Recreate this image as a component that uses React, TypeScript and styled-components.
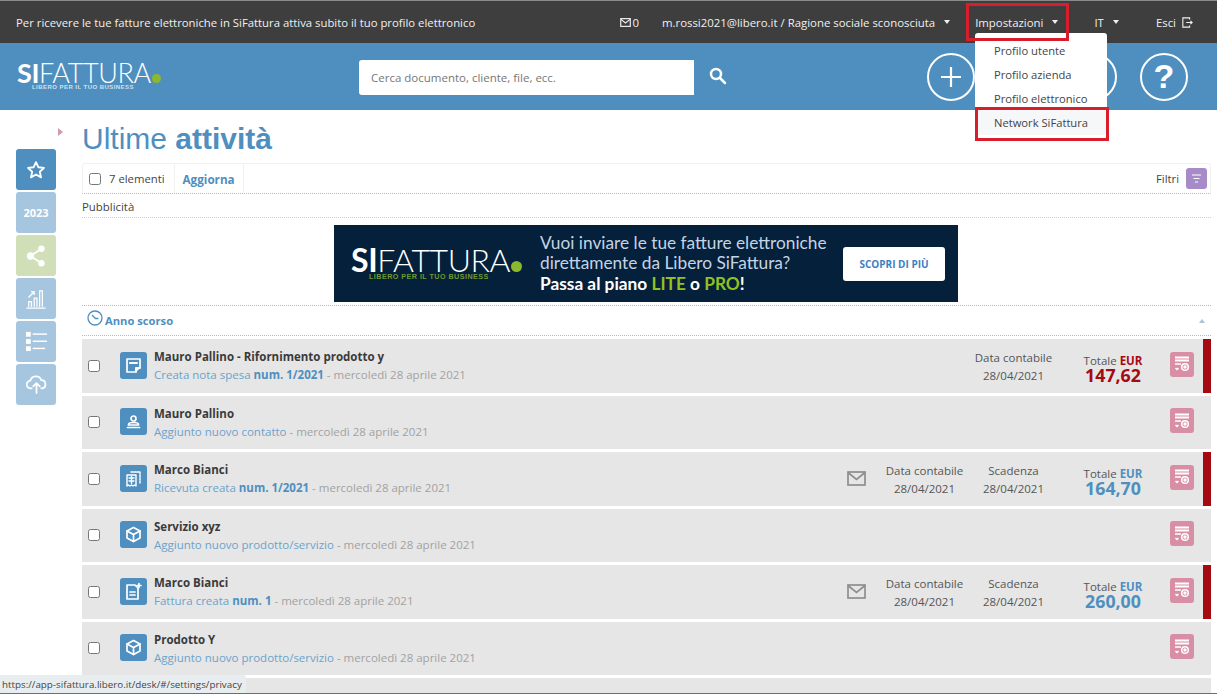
import React from "react";
import styled, { createGlobalStyle } from "styled-components";

const Global = createGlobalStyle`
  html, body { margin: 0; padding: 0; height: 694px; overflow: hidden; background: #fff; }
  body { font-family: "Open Sans", "Liberation Sans", sans-serif; color: #333; }
  * { box-sizing: border-box; }
`;

const Page = styled.div`
  position: relative;
  width: 1217px;
  height: 694px;
  overflow: hidden;
`;

const TopBar = styled.div`
  height: 43px;
  background: #3e3e3e;
  border-top: 1px solid #8a8a8a;
  color: #f0f0f0;
  font-size: 11.4px;
  display: flex;
  align-items: center;
  padding: 0 24px 0 16px;
`;
const TopMessage = styled.div`
  flex: 1;
  font-size: 11.33px;
`;
const TopItem = styled.div<{ $ml: number; $gap?: number }>`
  margin-left: ${(p) => p.$ml}px;
  display: flex;
  align-items: center;
  gap: ${(p) => p.$gap ?? 3}px;
  white-space: nowrap;
`;
const Caret = styled.span`
  margin-left: 6px;
  width: 0;
  height: 0;
  border-left: 3.5px solid transparent;
  border-right: 3.5px solid transparent;
  border-top: 4px solid #f0f0f0;
`;

const Header = styled.header`
  height: 67px;
  background: #4f8fbf;
  display: flex;
  align-items: center;
  padding-left: 17px;
`;
const Logo = styled.div`
  width: 342px;
  color: #fff;
  padding-bottom: 1px;
`;
const LogoWord = styled.div<{ $size: number }>`
  font-family: "Lato", sans-serif;
  font-size: ${(p) => p.$size}px;
  line-height: ${(p) => p.$size * 0.86}px;
  font-weight: 300;
  letter-spacing: -0.4px;
  display: flex;
  align-items: baseline;
  b { font-weight: 700; }
`;
const LogoDot = styled.span<{ $size: number }>`
  width: ${(p) => p.$size}px;
  height: ${(p) => p.$size}px;
  border-radius: 50%;
  background: #8cb82b;
  margin-left: 1px;
`;
const LogoTag = styled.div<{ $color: string; $ml: number; $size: number }>`
  font-family: "Liberation Sans", sans-serif;
  font-size: ${(p) => p.$size}px;
  line-height: ${(p) => p.$size + 1}px;
  font-weight: 700;
  letter-spacing: 0.45px;
  color: ${(p) => p.$color};
  margin-left: ${(p) => p.$ml}px;
  white-space: nowrap;
`;
const Search = styled.div`
  width: 335px;
  height: 35px;
  background: #fff;
  border-radius: 3px 0 0 3px;
  color: #777;
  font-size: 11.5px;
  display: flex;
  align-items: center;
  padding-left: 12px;
  margin-top: 1px;
`;
const SearchIcon = styled.svg`
  margin-left: 15px;
  margin-top: -1px;
`;
const RoundGroup = styled.div`
  margin-left: auto;
  margin-right: 29px;
  display: flex;
  gap: 23px;
`;
const RoundButton = styled.div`
  width: 48px;
  height: 48px;
  border: 2.5px solid #fff;
  border-radius: 50%;
  display: flex;
  align-items: center;
  justify-content: center;
  color: #fff;
  font-family: "Liberation Sans", sans-serif;
  font-weight: 700;
  font-size: 34px;
`;

const Body = styled.div`
  display: flex;
  padding-right: 6px;
`;
const Side = styled.aside`
  width: 82px;
  padding: 39px 0 0 16px;
  display: flex;
  flex-direction: column;
  gap: 2px;
`;
const SideButton = styled.div<{ $bg: string }>`
  width: 40px;
  height: 41px;
  border-radius: 3px;
  background: ${(p) => p.$bg};
  color: #fff;
  display: flex;
  align-items: center;
  justify-content: center;
  font-size: 11px;
  font-weight: 700;
`;
const SideArrow = styled.span`
  position: absolute;
  left: 58px;
  top: 128px;
  width: 0;
  height: 0;
  border-top: 4.5px solid transparent;
  border-bottom: 4.5px solid transparent;
  border-left: 5px solid #cf9aaa;
`;

const Main = styled.main`
  flex: 1;
  min-width: 0;
`;
const Title = styled.h1`
  margin: 0;
  height: 53px;
  padding-top: 12px;
  font-family: "Liberation Sans", sans-serif;
  font-size: 30px;
  line-height: 34px;
  font-weight: 400;
  color: #4f8fbf;
  b { font-weight: 700; }
`;
const Toolbar = styled.div`
  height: 31px;
  border: 1px solid #f1f1f1;
  border-radius: 3px 3px 0 0;
  border-bottom: 1px dotted #9dc0d8;
  display: flex;
  align-items: center;
  font-size: 11.3px;
`;
const ToolCount = styled.div`
  display: flex;
  align-items: center;
  height: 100%;
  padding: 0 9px 0 6px;
  border-right: 1px solid #f1f1f1;
  color: #444;
  gap: 8px;
`;
const ToolRefresh = styled.div`
  height: 100%;
  display: flex;
  align-items: center;
  padding: 0 8px;
  border-right: 1px solid #f1f1f1;
  font-size: 11.7px;
  font-weight: 700;
  color: #4f8fbf;
`;
const ToolFilter = styled.div`
  margin-left: auto;
  display: flex;
  align-items: center;
  gap: 7px;
  padding-right: 3px;
  color: #444;
`;
const FilterBtn = styled.div`
  width: 21px;
  height: 21px;
  border-radius: 3px;
  background: #a78bc9;
  display: flex;
  align-items: center;
  justify-content: center;
`;
const Check = styled.span`
  flex: none;
  width: 12px;
  height: 12px;
  background: #fff;
  border: 1px solid #767676;
  border-radius: 2.5px;
`;
const AdLabel = styled.div`
  height: 24px;
  font-size: 11.4px;
  line-height: 26px;
  color: #444;
  border-bottom: 1px dotted #c4d3de;
`;
const AdWrap = styled.div`
  height: 88px;
  padding: 7px 1px 0 0;
  display: flex;
  justify-content: center;
  border-bottom: 1px dotted #9dc0d8;
`;
const Banner = styled.div`
  width: 624px;
  height: 77px;
  background: #04203a;
  color: #fff;
  display: flex;
  align-items: center;
  padding-left: 17px;
`;
const BannerLogo = styled.div`
  width: 189px;
`;
const BannerText = styled.div`
  width: 303px;
  font-size: 17.3px;
  line-height: 20.500px;
  color: #c4d4e4;
  font-family: "Lato", sans-serif;
  white-space: nowrap;
  strong { color: #fff; font-weight: 700; }
  em { color: #93c01f; font-style: normal; font-weight: 700; }
`;
const BannerCta = styled.div`
  width: 102px;
  height: 34px;
  margin-top: 1px;
  background: #fff;
  border-radius: 3px;
  color: #3d7fc0;
  font-size: 10px;
  font-weight: 700;
  display: flex;
  align-items: center;
  justify-content: center;
`;
const GroupHead = styled.div`
  height: 30px;
  border-bottom: 1px dotted #9dc0d8;
  display: flex;
  align-items: center;
  padding-left: 5px;
  color: #4f8fbf;
  font-size: 11.2px;
  font-weight: 700;
  gap: 2px;
`;
const HeadCaret = styled.span`
  margin-left: auto;
  margin-right: 6px;
  width: 0;
  height: 0;
  border-left: 3.5px solid transparent;
  border-right: 3.5px solid transparent;
  border-bottom: 4px solid #a9c3d8;
`;
const List = styled.div`
  padding-top: 3px;
  display: flex;
  flex-direction: column;
  gap: 3px;
`;
const Row = styled.div`
  position: relative;
  height: 53.5px;
  flex: none;
  background: #e6e6e6;
  display: flex;
  align-items: center;
  padding-left: 6px;
  padding-right: 17px;
`;
const RowIcon = styled.div`
  width: 27px;
  height: 27px;
  margin-left: 20px;
  border-radius: 3px;
  background: #4f8fbf;
  display: flex;
  align-items: center;
  justify-content: center;
  flex: none;
  margin-top: -1px;
`;
const RowText = styled.div`
  flex: 1;
  margin-left: 7px;
  min-width: 0;
  padding-top: 2px;
`;
const RowTitle = styled.div`
  font-size: 11.5px;
  line-height: 16px;
  font-weight: 700;
  color: #3a3a3a;
`;
const RowSub = styled.div`
  font-size: 11.5px;
  line-height: 19px;
  color: #a2a2a2;
  span { color: #6ba3cc; }
  b { color: #4f8fbf; font-weight: 700; }
`;
const MailIcon = styled.svg`
  flex: none;
  margin-right: 14px;
`;
const Cell = styled.div`
  width: 89px;
  margin-top: 2px;
  text-align: center;
  font-size: 11.5px;
  line-height: 18px;
  color: #555;
`;
const Total = styled.div<{ $color: string }>`
  width: 110px;
  margin-top: 6px;
  text-align: center;
  font-size: 11.5px;
  color: #555;
  line-height: 13px;
  b { color: ${(p) => p.$color}; font-weight: 700; }
  strong {
    display: block;
    color: ${(p) => p.$color};
    font-size: 17.8px;
    line-height: 16px;
    font-weight: 700;
  }
`;
const ActionBtn = styled.div`
  width: 24px;
  height: 25px;
  margin-left: 2px;
  border-radius: 3px;
  background: #d88fa6;
  display: flex;
  align-items: center;
  justify-content: center;
  margin-top: -3px;
`;
const Flag = styled.span`
  position: absolute;
  right: 0;
  top: 0;
  bottom: 0;
  width: 8px;
  background: #a50a12;
`;

const Menu = styled.div`
  position: absolute;
  left: 975px;
  top: 33px;
  width: 132px;
  height: 107px;
  background: #fff;
  border-radius: 3px;
  padding-top: 6px;
  font-size: 11.2px;
  color: #444;
`;
const MenuItem = styled.div<{ $active?: boolean }>`
  height: 24px;
  line-height: 24px;
  padding-left: 19px;
  background: ${(p) => (p.$active ? "#f6f7f9" : "transparent")};
`;
const RedBox = styled.div<{ $l: number; $t: number; $w: number; $h: number }>`
  position: absolute;
  left: ${(p) => p.$l}px;
  top: ${(p) => p.$t}px;
  width: ${(p) => p.$w}px;
  height: ${(p) => p.$h}px;
  border: 3px solid #d81e2c;
`;
const StatusBar = styled.div`
  position: absolute;
  left: 0;
  bottom: 1px;
  width: 246px;
  height: 18px;
  background: #e8edf0;
  border-top-right-radius: 3px;
  font-size: 9.8px;
  line-height: 19px;
  padding-left: 2px;
  color: #444;
  white-space: nowrap;
`;
const BottomEdge = styled.div`
  position: absolute;
  left: 0;
  right: 0;
  bottom: 0;
  height: 1px;
  background: #6e6e6e;
`;

const DocIcon = ({ kind }: { kind: string }) => {
  const p = { fill: "none", stroke: "#fff", strokeWidth: 1.7, strokeLinejoin: "round" as const, strokeLinecap: "round" as const };
  return (
    <svg width="19" height="19" viewBox="0 0 19 19">
      {kind === "note" && (
        <g {...p}>
          <path d="M3 3h13v8l-5 5H3z" />
          <path d="M12 16v-4h4M6 7h7" strokeWidth={2} />
        </g>
      )}
      {kind === "user" && (
        <g {...p}>
          <circle cx="9.5" cy="6.500" r="2.500" />
          <path d="M4.500 12.500c0-1 2-2 5-2s5 1 5 2v.5h-10z" />
          <path d="M3.500 15.500h12" />
        </g>
      )}
      {kind === "receipt" && (
        <g {...p} strokeWidth={1.4}>
          <path d="M7 3h9v11" strokeDasharray="2 1" />
          <path d="M3 6h9v11l-1.500-1-1.500 1-1.500-1-1.500 1-1.500-1L3 17z" />
          <path d="M5 9h5M5 12h5M7.500 7.500v7" />
        </g>
      )}
      {kind === "box" && (
        <g {...p}>
          <path d="M9.500 2.500l6.500 3.500v7l-6.500 3.500L3 13V6z" />
          <path d="M3 6l6.500 3.500L16 6M9.500 9.500v7" />
        </g>
      )}
      {kind === "invoice" && (
        <g {...p}>
          <path d="M3 3h8l3 3v11H3z" />
          <path d="M6 10h5M6 13h5" />
          <path d="M15 1.500v4M13 3.500h4" />
        </g>
      )}
    </svg>
  );
};

const ActionIcon = () => (
  <svg width="18" height="18" viewBox="0 0 18 18" fill="none" stroke="#fff" strokeWidth="1.500">
    <path d="M2 2.500h14M2 5.500h14" strokeWidth="2" />
    <path d="M2 9h6M2.500 13l1.500 1.500L5.500 13" />
    <circle cx="12" cy="12" r="3.300" />
    <circle cx="12" cy="12" r="1" fill="#fff" />
  </svg>
);

const Envelope = () => (
  <MailIcon width="19" height="15" viewBox="0 0 19 15" fill="none" stroke="#8e8e8e" strokeWidth="1.700">
    <rect x="1" y="1" width="17" height="13" />
    <path d="M1 1.500l8.500 7 8.500-7" />
  </MailIcon>
);

const Logotype = ({ banner }: { banner?: boolean }) => (
  <>
    <LogoWord $size={banner ? 32 : 27}>
      <b>SI</b>FATTURA
      <LogoDot $size={banner ? 11 : 9} />
    </LogoWord>
    <LogoTag $color={banner ? "#6d9a2e" : "#cfe0ee"} $ml={banner ? 18 : 15} $size={banner ? 7.2 : 6}>
      LIBERO PER IL TUO BUSINESS
    </LogoTag>
  </>
);

type Item = {
  icon: string;
  title: string;
  lead: string;
  num?: string;
  mail?: boolean;
  cells?: [string, string][];
  total?: [string, string];
  flag?: boolean;
};

const items: Item[] = [
  { icon: "note", title: "Mauro Pallino - Rifornimento prodotto y", lead: "Creata nota spesa", num: "num. 1/2021", cells: [["Data contabile", "28/04/2021"]], total: ["147,62", "#a50a12"], flag: true },
  { icon: "user", title: "Mauro Pallino", lead: "Aggiunto nuovo contatto" },
  { icon: "receipt", title: "Marco Bianci", lead: "Ricevuta creata", num: "num. 1/2021", mail: true, cells: [["Data contabile", "28/04/2021"], ["Scadenza", "28/04/2021"]], total: ["164,70", "#4f8fbf"], flag: true },
  { icon: "box", title: "Servizio xyz", lead: "Aggiunto nuovo prodotto/servizio" },
  { icon: "invoice", title: "Marco Bianci", lead: "Fattura creata", num: "num. 1", mail: true, cells: [["Data contabile", "28/04/2021"], ["Scadenza", "28/04/2021"]], total: ["260,00", "#4f8fbf"], flag: true },
  { icon: "box", title: "Prodotto Y", lead: "Aggiunto nuovo prodotto/servizio" },
  { icon: "box", title: "", lead: "" },
];

const side = { strokeWidth: 1.8, stroke: "#fff", fill: "none", strokeLinecap: "round" as const, strokeLinejoin: "round" as const };

export default function App() {
  return (
    <Page>
      <Global />
      <TopBar>
        <TopMessage>Per ricevere le tue fatture elettroniche in SiFattura attiva subito il tuo profilo elettronico</TopMessage>
        <TopItem $ml={0} $gap={1}>
          <svg width="11" height="9" viewBox="0 0 12 10" fill="none" stroke="#f0f0f0" strokeWidth="1.300">
            <rect x="0.700" y="0.700" width="10.600" height="8.600" />
            <path d="M1 1.500l5 4 5-4" />
          </svg>
          0
        </TopItem>
        <TopItem $ml={23}>m.rossi2021@libero.it / Ragione sociale sconosciuta<Caret /></TopItem>
        <TopItem $ml={25}>Impostazioni<Caret /></TopItem>
        <TopItem $ml={36}>IT<Caret /></TopItem>
        <TopItem $ml={37}>
          Esci
          <svg width="11" height="11" viewBox="0 0 13 13" fill="none" stroke="#f0f0f0" strokeWidth="1.300" style={{ marginLeft: 3 }}>
            <path d="M9 3V1H1v11h8v-2M5 6.500h7M10 4.500l2 2-2 2" />
          </svg>
        </TopItem>
      </TopBar>

      <Header>
        <Logo><Logotype /></Logo>
        <Search>Cerca documento, cliente, file, ecc.</Search>
        <SearchIcon width="18" height="18" viewBox="0 0 18 18" fill="none" stroke="#fff" strokeWidth="2.500" strokeLinecap="round">
          <circle cx="7" cy="7" r="5" />
          <path d="M11 11l5 5" />
        </SearchIcon>
        <RoundGroup>
          <RoundButton>
            <svg width="22" height="22" viewBox="0 0 22 22" stroke="#fff" strokeWidth="2.200"><path d="M11 1v20M1 11h20" /></svg>
          </RoundButton>
          <RoundButton />
          <RoundButton>
            <svg width="30" height="30" viewBox="0 0 30 30" fill="none" stroke="#fff" strokeWidth="2">
              <path d="M15 5c-7 0-12 4-12 11v7h24v-7c0-7-5-11-12-11z" />
            </svg>
          </RoundButton>
          <RoundButton>?</RoundButton>
        </RoundGroup>
      </Header>

      <Body>
        <SideArrow />
        <Side>
          <SideButton $bg="#4f8fbf">
            <svg width="20" height="20" viewBox="0 0 24 24" {...side} strokeWidth={2.200}>
              <path d="M12 2.500l2.900 6.200 6.700.8-5 4.600 1.400 6.700-6-3.400-6 3.400 1.400-6.700-5-4.600 6.700-.8z" />
            </svg>
          </SideButton>
          <SideButton $bg="#a6c6e0">2023</SideButton>
          <SideButton $bg="#d0dfb8">
            <svg width="20" height="22" viewBox="0 0 22 24" fill="#fff" stroke="#fff" strokeWidth="2">
              <path d="M17 4L5 12l12 8" fill="none" />
              <circle cx="17" cy="4" r="2.500" />
              <circle cx="5" cy="12" r="3" />
              <circle cx="17" cy="20" r="2.500" />
            </svg>
          </SideButton>
          <SideButton $bg="#a6c6e0">
            <svg width="20" height="24" viewBox="0 0 22 24" {...side} strokeWidth={1.400}>
              <path d="M1 22h20M3 20v-5h3v5M9 20v-9h3v9M15 20V3h3v17M3 10l6-6M6 4h3v3" />
            </svg>
          </SideButton>
          <SideButton $bg="#a6c6e0">
            <svg width="21" height="21" viewBox="0 0 22 22" fill="#fff">
              <rect x="0" y="1" width="5" height="5" />
              <rect x="0" y="8.500" width="5" height="5" />
              <rect x="0" y="16" width="5" height="5" />
              <rect x="7" y="2.500" width="15" height="1.500" />
              <rect x="7" y="10" width="15" height="1.500" />
              <rect x="7" y="17.500" width="13" height="1.500" />
            </svg>
          </SideButton>
          <SideButton $bg="#a6c6e0">
            <svg width="21" height="21" viewBox="0 0 22 22" {...side}>
              <path d="M6 15H5a4 4 0 0 1-.5-8A6 6 0 0 1 16 6.500 4.300 4.300 0 0 1 17 15h-1" />
              <path d="M11 20v-10M7.500 13L11 9.500l3.500 3.500" />
            </svg>
          </SideButton>
        </Side>

        <Main>
          <Title>Ultime <b>attività</b></Title>
          <Toolbar>
            <ToolCount><Check />7 elementi</ToolCount>
            <ToolRefresh>Aggiorna</ToolRefresh>
            <ToolFilter>
              Filtri
              <FilterBtn>
                <svg width="11" height="9" viewBox="0 0 11 9" stroke="#fff" strokeWidth="1.200"><path d="M1 1h9M2.500 4.500h6M4 8h3" /></svg>
              </FilterBtn>
            </ToolFilter>
          </Toolbar>
          <AdLabel>Pubblicità</AdLabel>
          <AdWrap>
            <Banner>
              <BannerLogo><Logotype banner /></BannerLogo>
              <BannerText>
                Vuoi inviare le tue fatture elettroniche<br />
                direttamente da Libero SiFattura?<br />
                <strong>Passa al piano <em>LITE</em> o <em>PRO</em>!</strong>
              </BannerText>
              <BannerCta>SCOPRI DI PIÙ</BannerCta>
            </Banner>
          </AdWrap>
          <GroupHead>
            <svg width="16" height="16" viewBox="0 0 16 16" fill="none" stroke="#4f8fbf" strokeWidth="1.300" style={{ marginTop: -5 }}>
              <circle cx="8" cy="8" r="7" />
              <path d="M5 5l3.500 3.500h3" />
            </svg>
            Anno scorso
            <HeadCaret />
          </GroupHead>
          <List>
            {items.map((it, i) => (
              <Row key={i}>
                <Check />
                <RowIcon><DocIcon kind={it.icon} /></RowIcon>
                <RowText>
                  <RowTitle>{it.title}</RowTitle>
                  {it.lead && (
                    <RowSub>
                      <span>{it.lead}</span>{it.num && <> <b>{it.num}</b></>} - mercoledì 28 aprile 2021
                    </RowSub>
                  )}
                </RowText>
                {it.mail && <Envelope />}
                {it.cells?.map(([a, b]) => (
                  <Cell key={a}>{a}<br />{b}</Cell>
                ))}
                {it.total && (
                  <Total $color={it.total[1]}>
                    Totale <b>EUR</b>
                    <strong>{it.total[0]}</strong>
                  </Total>
                )}
                {i < 6 && <ActionBtn><ActionIcon /></ActionBtn>}
                {it.flag && <Flag />}
              </Row>
            ))}
          </List>
        </Main>
      </Body>

      <Menu>
        <MenuItem>Profilo utente</MenuItem>
        <MenuItem>Profilo azienda</MenuItem>
        <MenuItem>Profilo elettronico</MenuItem>
        <MenuItem $active>Network SiFattura</MenuItem>
      </Menu>
      <RedBox $l={966} $t={3} $w={103} $h={38} />
      <RedBox $l={975} $t={107} $w={134} $h={34} />
      <StatusBar>https://app-sifattura.libero.it/desk/#/settings/privacy</StatusBar>
      <BottomEdge />
    </Page>
  );
}
